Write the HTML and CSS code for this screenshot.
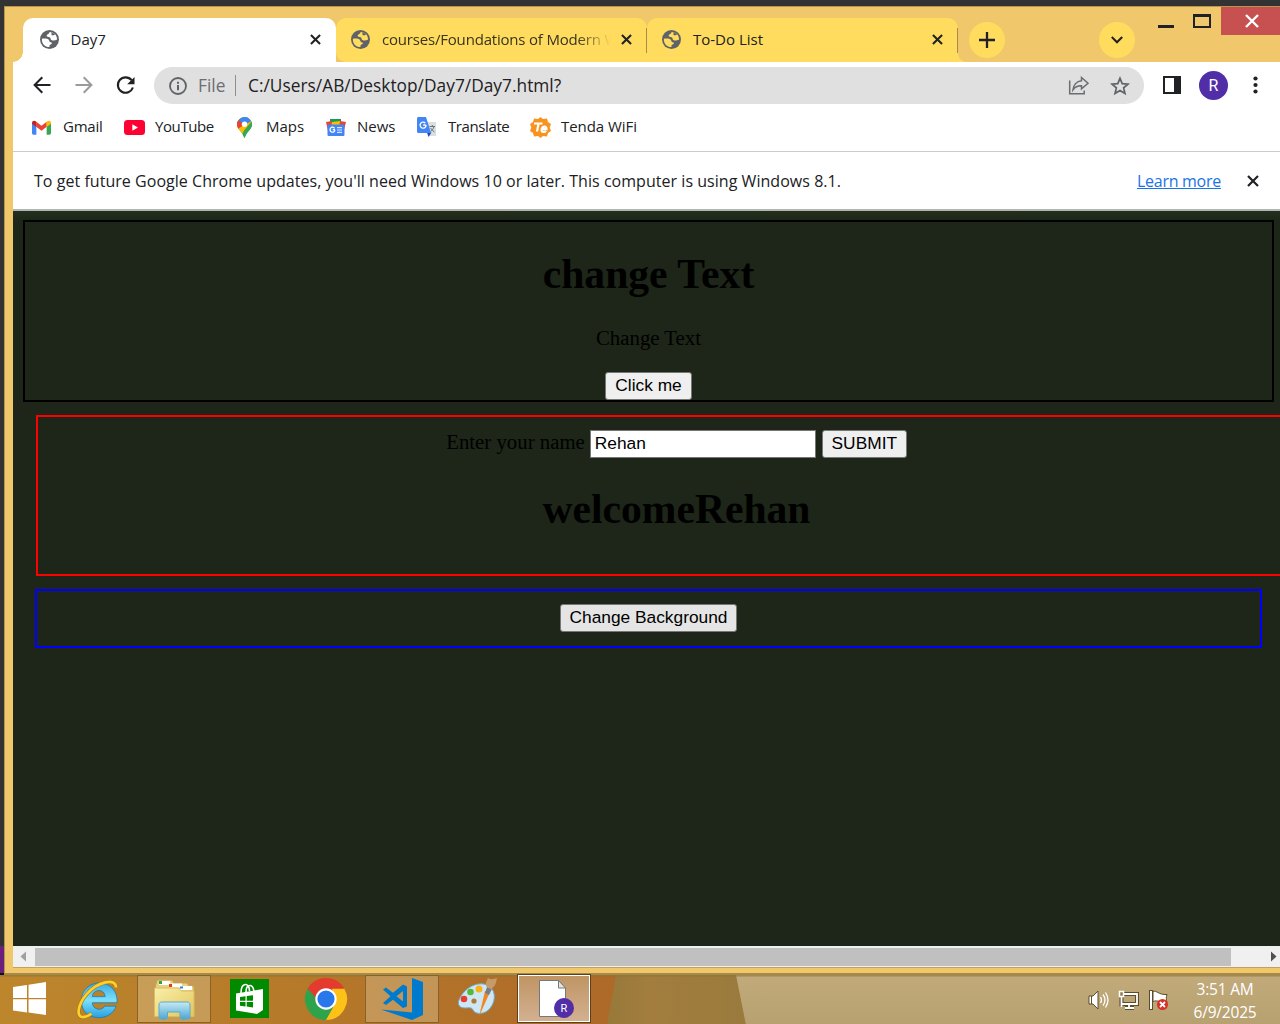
FILE: index.html
```html
<!DOCTYPE html>
<html lang="en">
<head>
<meta charset="utf-8">
<title>Day7</title>
<link rel="stylesheet" href="styles.css">
</head>
<body>
<svg class="defs" width="0" height="0">
  <defs>
    <symbol id="globe" viewBox="0 0 20 20">
      <circle cx="10" cy="10" r="10" fill="#5f6368"/>
      <path fill="currentColor" d="M10 2C10 4 7 4.500 7 6c0 1.300 2 1.300 3 1.500 1.500.4.800 2.200 2 3 1.500 1 4 .8 6-.5C18 5 14.500 2 10 2z"/>
      <path fill="currentColor" d="M2 9.200c2.500-.6 5.500-.6 7 .8 1.300 1.300.5 2.500 2.500 3 1.500.5 1.300 2-.3 2.300-1.400.2-1.200 1.500-1.200 2.700C5 18 1.600 14 2 9.200z"/>
      <path fill="#5f6368" d="M12 2c.5 2-.5 3 .5 3.500 1.500.5 3-.5 3.500-1z"/>
    </symbol>
    <symbol id="close" viewBox="0 0 12 12"><path d="M1 1 11 11M11 1 1 11" stroke="#202124" stroke-width="2.200" fill="none"/></symbol>
  </defs>
</svg>
<div class="screen">
  <div class="window">
    <header class="titlebar">
      <div class="tab active"><svg class="globe"><use href="#globe"/></svg><span class="name">Day7</span><svg class="x"><use href="#close"/></svg></div>
      <div class="tab second"><svg class="globe"><use href="#globe"/></svg><span class="name fade">courses/Foundations of Modern W</span><svg class="x"><use href="#close"/></svg></div>
      <div class="tab last"><svg class="globe"><use href="#globe"/></svg><span class="name">To-Do List</span><svg class="x"><use href="#close"/></svg></div>
      <div class="round plus"><svg width="16" height="16"><path d="M8 0v16M0 8h16" stroke="#202124" stroke-width="2.300"/></svg></div>
      <div class="round more"><svg width="12" height="8"><path d="M.8 1 6 6.300 11.200 1" stroke="#202124" stroke-width="2" fill="none"/></svg></div>
      <div class="min"></div>
      <div class="max"></div>
      <div class="closewin"><svg width="14" height="12"><path d="M1 0 13 12M13 0 1 12" stroke="#fff" stroke-width="2.400"/></svg></div>
    </header>
    <div class="toolbar">
      <svg class="back" width="18" height="18"><path d="M17.500 9H2M9.300 1.300 1.600 9l7.700 7.700" stroke="#202124" stroke-width="2" fill="none"/></svg>
      <svg class="fwd" width="18" height="18"><path d="M.5 9H16M8.700 1.300 16.400 9l-7.700 7.700" stroke="#9b9b9b" stroke-width="2" fill="none"/></svg>
      <svg class="reload" width="19" height="19"><path d="M15.600 4.200A7.700 7.700 0 1 0 16.900 11.500" stroke="#202124" stroke-width="2.100" fill="none"/><path d="M18.500 1v7.300h-7.300z" fill="#202124"/></svg>
      <div class="omnibox">
        <svg class="info" width="18" height="18"><circle cx="9" cy="9" r="8" fill="none" stroke="#5f6368" stroke-width="1.800"/><path d="M9 8v5.300M9 4.700v2" stroke="#5f6368" stroke-width="2"/></svg>
        <span class="file">File</span><span class="bar"></span><span class="url">C:/Users/AB/Desktop/Day7/Day7.html?</span>
        <svg class="share" width="22" height="20"><path d="M1.700 4.500v13.300h14.500V14.500" fill="none" stroke="#6a6d71" stroke-width="1.500"/><path d="M13.500 1.500 20 7.300l-6.500 5.500V9.700C9.500 9.500 7 11 5 13.700c.5-4.500 3.500-8.500 8.500-9z" fill="none" stroke="#6a6d71" stroke-width="1.500"/></svg>
        <svg class="star" width="20" height="20" viewBox="0 0 20 20"><path d="m10 2.300 2.200 5.300 5.800.5-4.400 3.800 1.400 5.600-5-3-5 3 1.400-5.600L2 8.100l5.800-.5z" fill="none" stroke="#5f6368" stroke-width="1.700"/></svg>
      </div>
      <div class="panel"></div>
      <div class="avatar">R</div>
      <svg class="dots" width="5" height="18"><g fill="#202124"><circle cx="2.500" cy="2.500" r="2.100"/><circle cx="2.500" cy="9" r="2.100"/><circle cx="2.500" cy="15.500" r="2.100"/></g></svg>
    </div>
    <nav class="bookmarks">
      <a class="b-gmail"><svg width="19" height="15" viewBox="0 0 20 15"><path d="M0 2.500v10.700C0 14.200.7 15 1.600 15h3V6z" fill="#4285f4"/><path d="M20 2.500v10.700c0 1-.7 1.800-1.600 1.800h-3V6z" fill="#34a853"/><path d="M4.500 1.500 10 5.700l5.500-4.200v5.300L10 11 4.500 6.800z" fill="#ea4335"/><path d="M0 3C0 .5 2.500-.3 4.600 1.400v5.500L0 3.500z" fill="#c5221f"/><path d="M20 3c0-2.500-2.500-3.300-4.600-1.600v5.500L20 3.500z" fill="#fbbc04"/></svg><span>Gmail</span></a>
      <a class="b-yt"><svg width="21" height="15"><rect width="21" height="15" rx="3.500" fill="#ff0033"/><path d="M8.300 4.300v6.400L14 7.500z" fill="#fff"/></svg><span>YouTube</span></a>
      <a class="b-maps"><svg width="15" height="21" viewBox="0 0 15 21"><clipPath id="pin"><path d="M7.500 0A7.400 7.400 0 0 0 0 7.400c0 5 5.500 6.600 7 13.100.2.600.8.600 1 0 1.500-6.500 7-8.100 7-13.100A7.400 7.400 0 0 0 7.500 0z"/></clipPath><g clip-path="url(#pin)"><path d="M0 0h15v21H0z" fill="#34a853"/><path d="M0 15.500V7h7.500L12 1l3 4.500L4 18z" fill="#fbbc04"/><path d="M0 12.500V2l7.500 5.500z" fill="#ea4335"/><path d="M1.500 2.500 7 0h6l1.500 4L7.500 8z" fill="#4285f4"/><path d="M15 4 7 13.500 5 19h10z" fill="#34a853"/></g><circle cx="7.500" cy="7.300" r="2.700" fill="#fff"/></svg><span>Maps</span></a>
      <a class="b-news"><svg width="20" height="17" viewBox="0 0 20 17"><path d="M4 0h11v8H4z" fill="#0f9d58"/><path d="m0 3 6-1 3 8-7 2z" fill="#ea4335"/><path d="m6 3 8-1 1 7H5z" fill="#fbbc04"/><path d="m14 2 6 1-2 8-5-1z" fill="#ea4335"/><rect x="1.500" y="5.500" width="17" height="11.500" rx="1" fill="#4285f4"/><path d="M9 10.700H6.700M8.600 9.300a2.500 2.500 0 1 0 .4 1.800" stroke="#fff" stroke-width="1.300" fill="none"/><path d="M11 8.700h5M11 11h5M11 13.300h5" stroke="#dbe7ff" stroke-width="1.200"/></svg><span>News</span></a>
      <a class="b-tr"><svg width="20" height="20" viewBox="0 0 20 20"><path d="M8 5h11v14H11z" fill="#dcdfe2"/><path d="M10 15.500h4.500L11.500 20z" fill="#2a45b8"/><path d="M1.500 0H9l5 16H1.500C.6 16 0 15.400 0 14.500v-13C0 .6.600 0 1.500 0z" fill="#4285f4"/><path d="M8.800 8H6.200M8.300 6.100A3 3 0 1 0 9.100 8" stroke="#fff" stroke-width="1.300" fill="none"/><path d="M12.500 9.500H18M15.300 8v1.500M17 9.500c-.7 2.500-2 4-3.500 5.200M13.500 11c1 1.700 2.300 3 4 4" stroke="#66767c" fill="none"/></svg><span>Translate</span></a>
      <a class="b-tenda"><svg width="21" height="21" viewBox="0 0 21 21"><path d="m10.500 0 2.500 2 4-.5 1 3.500 3 2-1.300 3.500L21 14l-3 2-1 3.500-4-.5-2.500 2L8 19l-4 .5L3 16l-3-2 1.300-3.500L0 7l3-2 1-3.500 4 .5z" fill="#f79420"/><path d="M4 6.500h8.500M8.500 7 7 14.500M11.500 12.200h5c0-4-4.500-3-4.900.6-.2 2.600 3.200 2.600 4.400 1" stroke="#fff" stroke-width="2.200" fill="none"/></svg><span>Tenda WiFi</span></a>
    </nav>
    <div class="infobar"><span class="msg">To get future Google Chrome updates, you'll need Windows 10 or later. This computer is using Windows 8.1.</span><a class="learn">Learn more</a><svg class="x"><use href="#close"/></svg></div>
    <main class="page">
      <section class="one"><h1>change Text</h1><p>Change Text</p><button>Click me</button></section>
      <section class="two"><div class="form"><label for="name">Enter your name</label><input id="name" value="Rehan"><button>SUBMIT</button></div><h1>welcomeRehan</h1></section>
      <section class="three"><button>Change Background</button></section>
    </main>
    <div class="scroll"><svg width="22" height="21"><path d="M13 5.500v10L7.500 10.500z" fill="#a0a0a0"/></svg><div class="thumb"></div><svg class="r" width="49" height="21"><path d="M40 5.500v10L45.500 10.500z" fill="#505050"/></svg></div>
  </div>
  <footer class="taskbar">
    <svg class="wall" width="1280" height="50">
      <defs>
        <linearGradient id="w1"><stop offset="0" stop-color="#bd862c"/><stop offset=".5" stop-color="#b5792a"/><stop offset="1" stop-color="#ae6928"/></linearGradient>
        <linearGradient id="w2"><stop offset="0" stop-color="#97793a"/><stop offset=".3" stop-color="#a27d3e"/><stop offset="1" stop-color="#9a7b3d"/></linearGradient>
        <linearGradient id="w3" x2="0" y2="1"><stop offset="0" stop-color="#c2aa7a"/><stop offset="1" stop-color="#b7a171"/></linearGradient>
      </defs>
      <path d="M0 0h620v50H0z" fill="url(#w1)"/><path d="M616 0h130v50H607z" fill="url(#w2)"/><path d="M736 0h544v50H746z" fill="url(#w3)"/><path d="M0 0h1280v1.500H0z" fill="#8b7338" opacity=".6"/>
    </svg>
    <div class="apps">
      <div class="app"><svg class="start" width="33" height="33"><path d="m0 5 14-2v13H0zM15.500 2.800 33 0v16H15.500zM0 17.200h14V30.500L0 28.500zM15.500 17.200H33V33l-17.500-2.500z" fill="#fff"/></svg></div>
      <div class="app"><svg width="40" height="40" viewBox="0 0 42 42"><defs><linearGradient id="ie" x2="0" y2="1"><stop offset="0" stop-color="#3ba9e0"/><stop offset=".5" stop-color="#7be0fb"/><stop offset="1" stop-color="#28a0e0"/></linearGradient></defs><path d="M41 25H15c.5 7.500 10 9 13 3.500h12C35 43 15 44 7 34-1 23 5 5 22 4c12 0 20 9 19 21zM15 18.500h13.500C28 10 16 10 15 18.500z" fill="url(#ie)" stroke="#1679b4" stroke-width=".8"/><path d="M40 9C40-2 20 3 9 16-.5 27-2 40 5 40c3 0 6-1.300 9-3.500" fill="none" stroke="#a87a10" stroke-width="4"/><path d="M40 9C40-2 20 3 9 16-.5 27-2 40 5 40c3 0 6-1.300 9-3.500" fill="none" stroke="#ffd02c" stroke-width="2.800"/></svg></div>
      <div class="app open"><svg width="42" height="42" viewBox="0 0 42 42"><defs><linearGradient id="fo" x2="1" y2="1"><stop offset="0" stop-color="#f9efaa"/><stop offset="1" stop-color="#e2c65c"/></linearGradient><linearGradient id="fb" x2="0" y2="1"><stop offset="0" stop-color="#c7eaf2"/><stop offset="1" stop-color="#4ba5d4"/></linearGradient></defs><path d="M4 2h15l2 3h13l2 3h5v31H2V10z" fill="#e9d27b" stroke="#c6a247"/><path d="M6 3h11v4H6zM16 5.500h13v4H16zM27 8h12v4H27z" fill="#fff"/><path d="M6 3h3v3H6z" fill="#21a559"/><path d="M16 6h3v3h-3z" fill="#e13b24"/><path d="M27 8.500h3v2h-3z" fill="#2784d6"/><path d="M1.500 10h24l3 3h12.500v25.500h-39.500z" fill="url(#fo)" stroke="#d8bd61"/><path d="M6 27c0-2 1-3 3-3h25c2 0 3 1 3 3v13c-6 2-9 2-10-1v-5H14.500v5c-1 3-4 3-8.500 1z" fill="url(#fb)" stroke="#5aaad0"/></svg></div>
      <div class="app store"><svg width="39" height="39"><path d="M0 0h39v39H0z" fill="#008a00"/><path d="m6 14.500 27-4.500v21l-6 4-21-3.500z" fill="#fff"/><path d="M11 14c0-11 8.500-11 8.500-2M16 13c0-8 7-9 8-1" fill="none" stroke="#fff" stroke-width="1.600"/><path d="m10 18 5.500-.7v4.500H10zM16.700 17l6.300-.7v5.500h-6.300zM10 23h5.500v4.500L10 26.800zM16.700 23H23v5.500l-6.300-.9z" fill="#008a00"/></svg></div>
      <div class="app"><svg width="42" height="42" viewBox="0 0 42 42"><path d="M21 21 2.800 10.500A21 21 0 0 1 39.200 10.500z" fill="#e33b2e"/><path d="M2.800 10.500A21 21 0 0 0 21 42L30 26l-9-5z" fill="#2da34b"/><path d="M39.200 10.500A21 21 0 0 1 21 42l9-16-3-15.500z" fill="#fdc217"/><path d="M2.800 10.500 12 26l9-15.500z" fill="#e33b2e"/><path d="M2.800 10.500 12 26h4V16L8 14z" fill="#2da34b"/><path d="M8 0h26l5.200 10.500H21L11 20 2.800 10.500z" fill="#e33b2e" clip-path="url(#cc)"/><clipPath id="cc"><circle cx="21" cy="21" r="21"/></clipPath><circle cx="21" cy="21" r="10.700" fill="#fff"/><circle cx="21" cy="21" r="8.600" fill="#2878eb"/></svg></div>
      <div class="app open"><svg width="42" height="42" viewBox="0 0 42 42"><path d="M31 0 42 4v33l-11 5L0 31.500l31 3z" fill="#007acc"/><path fill-rule="evenodd" d="M22 6.500 26 8.500v20L22 30 12 21.800 5 27l-3-2 7.500-6.800L2 11.500l3-2 7 5.200zM22 13v10.500l-6.500-5.300z" fill="#007acc"/></svg></div>
      <div class="app paint"><svg width="40" height="40" viewBox="0 0 40 40"><path d="M2 22C7 10 20 3 30 7c9 4 9 15 4 22-5 8-16 8-18 3-1-3-5-2-8-2-5 0-8-3-6-8z" fill="#cfe7f3" stroke="#6dacd0"/><circle cx="7" cy="21" r="3.300" fill="#e83b32"/><circle cx="13.500" cy="14" r="3.300" fill="#56b83a"/><circle cx="22" cy="11" r="3.500" fill="#f8b21b"/><circle cx="17" cy="23" r="2.600" fill="#ad7a39"/><path d="m33 14-11 24.500L28 13z" fill="#ee8726"/><path d="m28 15 2-6 5 2-3 6z" fill="#777d83"/><path d="M30 9c-3-3 0-6 1-9 3 2 6 1 9 0-1 4-1 8-6 11z" fill="#c59b6a"/></svg></div>
      <div class="app current"><svg width="35" height="39"><path d="M.5.500h19l7 7.500v28.500H.5z" fill="#fff" stroke="#777"/><path d="M19.500.500V8h7z" fill="#e5e5e5" stroke="#777"/><circle cx="25" cy="28" r="10" fill="#512da8"/><text x="25" y="32" fill="#fff" font-family="Roboto, sans-serif" font-size="11" text-anchor="middle">R</text></svg></div>
    </div>
    <div class="tray">
      <svg width="21" height="20"><path d="M1 6h4l5-5v18l-5-5H1z" fill="#fff" stroke="#5c4d2d"/><path d="M3.500 6v8" stroke="#5c4d2d"/><path d="M12.500 7q2 3 0 6M15 4.500q4 5.500 0 11M17.500 2.500q5 7.500 0 15" fill="none" stroke="#fff" stroke-width="1.300"/></svg>
      <svg class="net" width="21" height="20"><g fill="none"><path d="M6 4h13v10H4M11 14v4M7 18h9M3.500 1.500v15" stroke="#5c4d2d" stroke-width="4"/><path d="M6 4h13v10H4M11 14v4M7 18h9M3.500 6v11" stroke="#fff" stroke-width="1.800"/><rect x="1.500" y="1.500" width="4" height="5" fill="#8f7b4e" stroke="#fff" stroke-width="1.500"/></g></svg>
      <svg class="flag" width="21" height="20"><path d="M2 0v20" stroke="#5c4d2d" stroke-width="4"/><path d="M2 1v18" stroke="#fff" stroke-width="2"/><path d="M4 1.500c4-1.500 5 3.500 14 3-1 3-1 5 0 8-7 .500-9-3-14-1z" fill="#fff" stroke="#5c4d2d"/><circle cx="13.500" cy="14.500" r="5.500" fill="#d93025"/><path d="m11 12 5 5m0-5-5 5" stroke="#fff" stroke-width="1.800"/></svg>
      <div class="clock"><span class="time">3:51 AM</span><span class="date">6/9/2025</span></div>
    </div>
  </footer>
</div>
</body>
</html>
```
FILE: styles.css
```css
* { box-sizing: border-box; }
body { margin: 0; font-family: "Open Sans", "Noto Sans", sans-serif; font-size: 15px; color: #202124; overflow: hidden; }
svg { display: block; flex: none; overflow: visible; }
.defs { position: absolute; }
span, a { white-space: nowrap; }
.screen { width: 1280px; height: 1024px; overflow: hidden; background: linear-gradient(#333 0 946px, #6d1f80 946px 973px, #111 973px); padding: 6px 0 0 4px; display: flex; flex-direction: column; }
.window { height: 969px; flex: none; background: #f0c76a; border-top: 1px solid #b8954c; border-left: 1px solid #b8954c; border-bottom: 2px solid #a68a49; padding-left: 8px; overflow: hidden; }

.titlebar { height: 55px; display: flex; align-items: flex-start; padding-left: 10px; }
.tab { height: 44px; margin-top: 11px; background: #ffdc5d; color: #ffdc5d; border-radius: 10px 10px 0 0; display: flex; align-items: center; flex: none; padding: 0 0 1px 15px; position: relative; width: 311px; }
.tab.active { width: 313px; background: #fff; color: #fff; padding-left: 16.5px; }
.tab.active::before { content: ""; position: absolute; left: -10px; bottom: 0; width: 10px; height: 10px; background: radial-gradient(circle at 0 0, transparent 9.500px, #fff 10px); }
.tab.second { border-radius: 10px 10px 0 10px; }
.tab.last::after { content: ""; position: absolute; right: -8px; bottom: 0; width: 8px; height: 8px; background: radial-gradient(circle at 100% 0, transparent 7.500px, #ffdc5d 8px); }
.tab.second::before, .tab.last::before { content: ""; position: absolute; right: 0; top: 10px; width: 1px; height: 25px; background: #a98d43; }
.globe { width: 19px; height: 19px; }
.name { margin-left: 12px; line-height: 24px; color: #202124; }
.tab .name { width: 232px; flex: none; padding-bottom: 1px; }
.tab.active .name { width: 239px; }
.tab .fade { letter-spacing: -.19px; mask-image: linear-gradient(90deg, #000 195px, transparent 229px); color: #37341f; }
.x { width: 12px; height: 12px; }
.tab .x { margin-left: 7px; width: 11px; height: 11px; }
.tab.active .x { margin-left: 0; }
.round { width: 36px; height: 36px; border-radius: 50%; background: #ffdc5d; margin-top: 15px; display: grid; place-items: center; flex: none; }
.plus { margin-left: 11px; }
.more { margin-left: 94px; }
.min { width: 16px; height: 3px; background: #202124; margin: 18px 0 0 23px; }
.max { width: 18px; height: 14px; border: 2px solid #202124; border-top-width: 3px; margin: 7px 0 0 19px; }
.closewin { width: 59px; height: 28px; background: #c75050; margin-left: 10px; display: grid; place-items: center; padding-left: 3px; }

.toolbar { height: 47px; background: #fff; display: flex; align-items: center; padding: 0 0 1px 20px; }
.back { margin-left: -.5px; }
.fwd { margin-left: 24px; }
.reload { margin-left: 23px; }
.omnibox { width: 990px; height: 37px; border-radius: 19px; background: #e0e0e0; margin: 1px 0 0 19.5px; display: flex; align-items: center; padding-left: 15px; font-size: 17.300px; }
.file { color: #6b6e72; margin-left: 11px; width: 27px; }
.bar { width: 1px; height: 21px; background: #8c8e91; margin: 0 12px 0 10px; }
.url { width: 820px; letter-spacing: .03px; }
.star { margin-left: 20px; }
.panel { width: 18px; height: 18px; border: 2px solid #202124; border-right-width: 7px; margin-left: 19px; }
.avatar { width: 29px; height: 29px; border-radius: 50%; background: #512da8; color: #fff; font: 16px/29px Roboto, sans-serif; text-align: center; margin-left: 18px; }
.dots { margin-left: 25px; }

.bookmarks { height: 42px; background: #fff; display: flex; align-items: center; padding: 0 0 6px 19px; }
.bookmarks a { display: flex; align-items: center; flex: none; }
.bookmarks span { padding-bottom: 2px; }
.b-gmail { width: 92px; } .b-yt { width: 113px; } .b-maps { width: 89px; } .b-news { width: 91px; } .b-tr { width: 113px; }
.b-gmail span { margin-left: 12px; letter-spacing: -.25px; } .b-yt span { margin-left: 10px; letter-spacing: -.4px; } .b-maps span { margin-left: 14px; }
.b-news span { margin-left: 11px; } .b-tr span { margin-left: 11px; letter-spacing: -.4px; } .b-tenda span { margin-left: 10px; letter-spacing: -.05px; }

.infobar { height: 60px; background: #fff; border-top: 1px solid #ccc; border-bottom: 2px solid #b3b5b3; display: flex; align-items: center; padding: 1px 0 0 21px; font-size: 16px; }
.msg { width: 1103px; letter-spacing: .038px; }
.learn { color: #1a73e8; text-decoration: underline; width: 84px; margin-right: 25.5px; letter-spacing: -.28px; }

.page { height: 735px; background: linear-gradient(#232f1f, #1d2618 10px); overflow: hidden; font: 20.800px/24px "Liberation Serif", serif; color: #000; padding: 9px 0 0 10px; }
.page section { border: 2px solid; text-align: center; }
.page h1 { font-size: 41.600px; line-height: 48px; margin: 28px 0; }
.page p { margin: -4px 0 0; padding-top: 4px; line-height: 24px; }
.page .one { width: 1251px; height: 182px; padding-top: .1px; }
.page .two { width: 1281px; height: 161px; margin: 13px 0 0 13px; border-color: #f00; padding-top: 13px; }
.page .two h1 { margin-top: 27px; }
.page .three { width: 1227px; height: 59px; margin: 13px 0 0 12px; border-color: #00f; padding-top: 13px; }
.form { display: flex; justify-content: center; height: 28px; }
.page button, .page input { font: 17.330px "Liberation Sans", sans-serif; height: 28px; border: 1px solid #767676; border-radius: 3px; background: #efefef; color: #000; padding: 0 8px 1px; display: block; }
.one button { width: 87px; margin: 22px auto 0; }
.page input { width: 226px; border-radius: 0; background: #fff; padding: 0 4px 1px; margin: 0 6px 0 5px; }
.form button { width: 85px; }
.page .three button { width: 177px; margin: 0 auto; background: #e5e5e5; }

.scroll { height: 22px; background: #f0f0f0; display: flex; border-bottom: 1px solid #c0a25c; }
.thumb { width: 1196px; height: 18px; margin-top: 2px; background: #c0c0c0; flex: none; }

.taskbar { height: 50px; flex: none; margin-left: -4px; display: grid; grid-template-columns: 1088px 192px; }
.wall { grid-area: 1 / 1 / 2 / 3; }
.apps { grid-area: 1 / 1; display: flex; z-index: 1; height: 48px; gap: 2px; margin-left: -15px; }
.app { width: 74px; display: grid; place-items: center; padding-bottom: 1px; }
.app:first-child { padding: 0 0 2px 15px; }
.store, .paint { padding: 0 2px 2px 0; }
.open { background: rgba(220, 199, 157, .4); border: 1px solid #d8c090; outline: 1px solid #8a6129; outline-offset: -1px; }
.app.current { background: linear-gradient(#c09564, #d2b091); border: 1px solid #fff; outline: 1px solid #5b401d; width: 72px; height: 47px; margin-left: 1px; padding: 2px 0 0 5px; }
.tray { grid-area: 1 / 2; display: flex; align-items: center; z-index: 1; color: #fff; }
.net { margin-left: 9px; } .flag { margin-left: 10px; }
.clock { display: flex; flex-direction: column; align-items: center; width: 104px; line-height: 23px; font-size: 15.5px; letter-spacing: -.2px; margin-left: 3px; padding-top: 1px; }
```
